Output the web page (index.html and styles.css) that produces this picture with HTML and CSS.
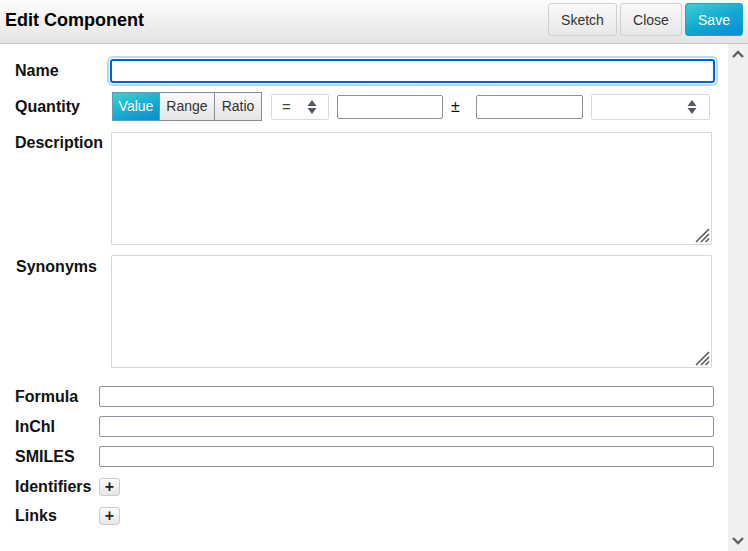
FILE: index.html
```html
<!DOCTYPE html>
<html>
<head>
<meta charset="utf-8">
<link rel="stylesheet" href="styles.css">
</head>
<body>
<div class="dialog">
  <div class="header">
    <div class="title">Edit Component</div>
    <div class="actions">
      <button class="btn btn-sketch">Sketch</button>
      <button class="btn btn-close">Close</button>
      <button class="btn btn-save">Save</button>
    </div>
  </div>
  <div class="main">
    <div class="content">
      <div class="row row-name">
        <label class="lbl lbl-wide">Name</label>
        <input class="inp inp-name" type="text">
      </div>
      <div class="row row-qty">
        <label class="lbl lbl-wide">Quantity</label>
        <div class="seg">
          <span class="seg-btn seg-active seg-value">Value</span>
          <span class="seg-btn seg-range">Range</span>
          <span class="seg-btn seg-ratio">Ratio</span>
        </div>
        <div class="sel sel-op">
          <span class="sel-text">=</span>
          <svg class="sel-arrows" width="10" height="16" viewBox="0 0 10 16"><path d="M5 1 L9.5 7 L0.5 7 Z M0.5 9 L9.5 9 L5 15 Z" fill="#555a60"/></svg>
        </div>
        <input class="inp inp-val" type="text">
        <span class="pm">±</span>
        <input class="inp inp-err" type="text">
        <div class="sel sel-unit">
          <span class="sel-text"></span>
          <svg class="sel-arrows" width="10" height="16" viewBox="0 0 10 16"><path d="M5 1 L9.5 7 L0.5 7 Z M0.5 9 L9.5 9 L5 15 Z" fill="#555a60"/></svg>
        </div>
      </div>
      <div class="row row-desc">
        <label class="lbl lbl-wide lbl-top">Description</label>
        <div class="ta-wrap">
          <textarea class="ta"></textarea>
          <svg class="grip" width="16" height="16" viewBox="0 0 16 16"><path d="M15 2 L2 15 M15 7 L7 15 M15 11.5 L11.5 15" stroke="#555" stroke-width="1.5" fill="none"/></svg>
        </div>
      </div>
      <div class="row row-syn">
        <label class="lbl lbl-wide lbl-top lbl-syn">Synonyms</label>
        <div class="ta-wrap">
          <textarea class="ta"></textarea>
          <svg class="grip" width="16" height="16" viewBox="0 0 16 16"><path d="M15 2 L2 15 M15 7 L7 15 M15 11.5 L11.5 15" stroke="#555" stroke-width="1.5" fill="none"/></svg>
        </div>
      </div>
      <div class="row row-formula">
        <label class="lbl lbl-narrow">Formula</label>
        <input class="inp inp-line" type="text">
      </div>
      <div class="row row-line">
        <label class="lbl lbl-narrow">InChI</label>
        <input class="inp inp-line" type="text">
      </div>
      <div class="row row-line">
        <label class="lbl lbl-narrow">SMILES</label>
        <input class="inp inp-line" type="text">
      </div>
      <div class="row row-ident">
        <label class="lbl lbl-narrow">Identifiers</label>
        <button class="plus">+</button>
      </div>
      <div class="row row-links">
        <label class="lbl lbl-narrow">Links</label>
        <button class="plus">+</button>
      </div>
    </div>
    <div class="scrollbar">
      <svg class="chev" width="12" height="8" viewBox="0 0 12 8"><path d="M1 7 L6 2 L11 7" stroke="#606060" stroke-width="2.4" fill="none"/></svg>
      <svg class="chev" width="12" height="8" viewBox="0 0 12 8"><path d="M1 1 L6 6 L11 1" stroke="#606060" stroke-width="2.4" fill="none"/></svg>
    </div>
  </div>
</div>
</body>
</html>
```
FILE: styles.css
```css
html, body {
  margin: 0;
  padding: 0;
  background: #fff;
}
body {
  font-family: "Liberation Sans", Arial, sans-serif;
  color: #111;
  width: 748px;
  height: 551px;
  overflow: hidden;
}
.dialog {
  display: flex;
  flex-direction: column;
  height: 551px;
}
.header {
  height: 43px;
  border-bottom: 1px solid #c6c6c6;
  background: linear-gradient(#fcfcfc, #e4e4e4);
  display: flex;
  justify-content: space-between;
  align-items: flex-start;
  padding: 0 5px;
  flex: none;
}
.title {
  font-weight: bold;
  font-size: 18px;
  line-height: 20px;
  margin-top: 10px;
  color: #000;
}
.actions {
  display: flex;
  gap: 3px;
  margin-top: 3px;
}
.btn {
  font-family: "Liberation Sans", Arial, sans-serif;
  font-size: 14px;
  height: 33px;
  border: 1px solid #cfcfcf;
  border-radius: 3px;
  background: linear-gradient(#f8f8f8, #e8e8e8);
  color: #333;
  padding: 0;
}
.btn-sketch { width: 69px; }
.btn-close { width: 62px; }
.btn-save {
  width: 58px;
  color: #fff;
  border-color: #1aa6c8;
  background: linear-gradient(160deg, #3fcfd0 0%, #13a9d2 50%, #0a8cd3 100%);
}
.main {
  flex: 1;
  display: flex;
  min-height: 0;
}
.content {
  width: 728px;
  display: flex;
  flex-direction: column;
}
.scrollbar {
  width: 20px;
  background: #f0f0f0;
  display: flex;
  flex-direction: column;
  justify-content: space-between;
  align-items: center;
  padding: 6px 0 6px 0;
  box-sizing: border-box;
}
.row {
  display: flex;
  align-items: center;
  padding-left: 15px;
}
.lbl {
  font-weight: bold;
  font-size: 16px;
  line-height: 18px;
  color: #111;
  flex: none;
}
.lbl-wide { width: 95px; }
.lbl-narrow { width: 84px; }
.lbl-top { align-self: flex-start; margin-top: 2px; }
.lbl-syn { padding-left: 1px; width: 94px; margin-top: 3px; }
.inp {
  box-sizing: border-box;
  border: 1px solid #8f8f9d;
  border-radius: 2px;
  background: #fff;
  margin: 0;
  padding: 0 4px;
  font-family: "Liberation Sans", Arial, sans-serif;
  font-size: 14px;
}
.row-name { margin-top: 15px; }
.inp-name {
  width: 605px;
  height: 24px;
  border: 2px solid #0060df;
  border-radius: 3px;
  box-shadow: 0 0 0 1px #fff, 0 0 0 3px #b3dcf6;
  outline: none;
}
.row-qty { margin-top: 9px; }
.seg {
  display: flex;
  margin-left: 2px;
  height: 29px;
}
.seg-btn {
  box-sizing: border-box;
  height: 29px;
  border: 1px solid #8c8c8c;
  font-size: 14px;
  line-height: 27px;
  text-align: center;
  color: #333;
  background: linear-gradient(#fafafa, #e4e4e4);
}
.seg-value { width: 48px; }
.seg-range { width: 55px; border-left: none; }
.seg-ratio { width: 47px; border-left: none; }
.seg-active {
  color: #fff;
  background: linear-gradient(160deg, #40d0d0 0%, #16aad2 55%, #0a8bd2 100%);
  border-color: #5b9db6;
}
.sel {
  box-sizing: border-box;
  height: 26px;
  border: 1px solid #dadada;
  border-radius: 2px;
  background: #fff;
  display: flex;
  align-items: center;
  justify-content: space-between;
  padding: 0 11px 0 9px;
}
.sel-text {
  font-size: 15px;
  color: #444;
  padding-left: 1px;
}
.sel-op { width: 58px; margin-left: 9px; }
.sel-unit { width: 119px; margin-left: 8px; padding-right: 12px; }
.inp-val { width: 106px; height: 24px; margin-left: 8px; }
.pm {
  font-size: 16px;
  color: #111;
  width: 33px;
  padding-left: 8px;
  box-sizing: border-box;
}
.inp-err { width: 107px; height: 24px; }
.row-desc { margin-top: 11px; }
.row-syn { margin-top: 10px; }
.ta-wrap {
  position: relative;
  margin-left: 1px;
  width: 601px;
  height: 113px;
}
.ta {
  box-sizing: border-box;
  width: 601px;
  height: 113px;
  border: 1px solid #d8d8d8;
  border-radius: 1px;
  resize: none;
  margin: 0;
  display: block;
}
.grip {
  position: absolute;
  right: 2px;
  bottom: 2px;
}
.row-formula { margin-top: 18px; }
.row-line { margin-top: 9px; }
.inp-line { width: 615px; height: 21px; }
.row-ident { margin-top: 11px; }
.row-links { margin-top: 11px; }
.plus {
  box-sizing: border-box;
  width: 21px;
  height: 18px;
  border: 1px solid #cccccc;
  border-radius: 3px;
  background: linear-gradient(#fbfbfb, #e6e6e6);
  padding: 0;
  font-family: "Liberation Sans", Arial, sans-serif;
  font-weight: bold;
  font-size: 16px;
  line-height: 14px;
  color: #222;
}
.chev { display: block; }
```
